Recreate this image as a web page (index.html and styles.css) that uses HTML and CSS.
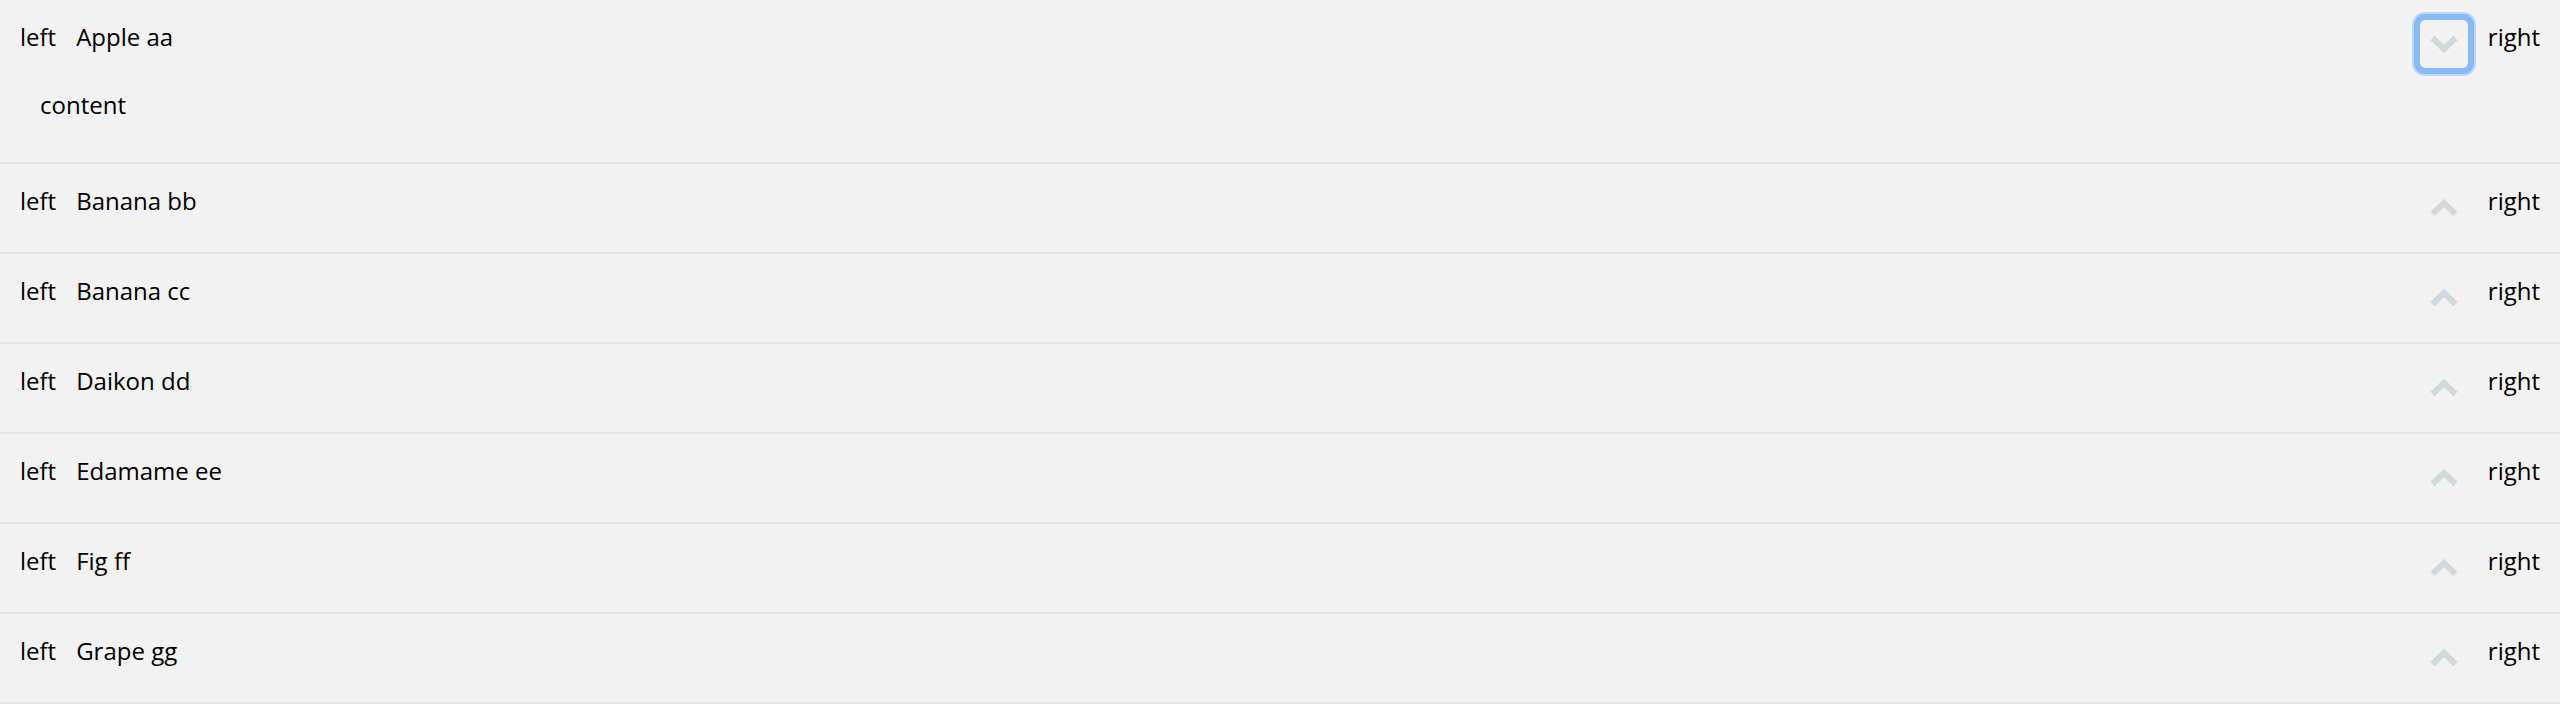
FILE: index.html
```html
<!DOCTYPE html>
<html lang="en">
<head>
<meta charset="utf-8">
<title>List</title>
<link rel="stylesheet" href="styles.css">
</head>
<body>
<ul class="list">
  <li class="item">
    <div class="header">
      <span class="left">left</span>
      <span class="title">Apple aa</span>
      <button class="toggle focused" type="button" aria-label="toggle">
        <svg class="chev" width="28" height="18" viewBox="0 0 28 18"><polyline points="2.5,3 14,14 25.5,3" /></svg>
      </button>
      <span class="right">right</span>
    </div>
    <div class="content">content</div>
  </li>
  <li class="item">
    <div class="header">
      <span class="left">left</span>
      <span class="title">Banana bb</span>
      <button class="toggle" type="button" aria-label="toggle">
        <svg class="chev up" width="28" height="18" viewBox="0 0 28 18"><polyline points="2.5,15 14,4 25.5,15" /></svg>
      </button>
      <span class="right">right</span>
    </div>
  </li>
  <li class="item">
    <div class="header">
      <span class="left">left</span>
      <span class="title">Banana cc</span>
      <button class="toggle" type="button" aria-label="toggle">
        <svg class="chev up" width="28" height="18" viewBox="0 0 28 18"><polyline points="2.5,15 14,4 25.5,15" /></svg>
      </button>
      <span class="right">right</span>
    </div>
  </li>
  <li class="item">
    <div class="header">
      <span class="left">left</span>
      <span class="title">Daikon dd</span>
      <button class="toggle" type="button" aria-label="toggle">
        <svg class="chev up" width="28" height="18" viewBox="0 0 28 18"><polyline points="2.5,15 14,4 25.5,15" /></svg>
      </button>
      <span class="right">right</span>
    </div>
  </li>
  <li class="item">
    <div class="header">
      <span class="left">left</span>
      <span class="title">Edamame ee</span>
      <button class="toggle" type="button" aria-label="toggle">
        <svg class="chev up" width="28" height="18" viewBox="0 0 28 18"><polyline points="2.5,15 14,4 25.5,15" /></svg>
      </button>
      <span class="right">right</span>
    </div>
  </li>
  <li class="item">
    <div class="header">
      <span class="left">left</span>
      <span class="title">Fig ff</span>
      <button class="toggle" type="button" aria-label="toggle">
        <svg class="chev up" width="28" height="18" viewBox="0 0 28 18"><polyline points="2.5,15 14,4 25.5,15" /></svg>
      </button>
      <span class="right">right</span>
    </div>
  </li>
  <li class="item">
    <div class="header">
      <span class="left">left</span>
      <span class="title">Grape gg</span>
      <button class="toggle" type="button" aria-label="toggle">
        <svg class="chev up" width="28" height="18" viewBox="0 0 28 18"><polyline points="2.5,15 14,4 25.5,15" /></svg>
      </button>
      <span class="right">right</span>
    </div>
  </li>
</ul>
</body>
</html>
```
FILE: styles.css
```css
html, body {
  margin: 0;
  padding: 0;
  background: #f2f2f2;
}
body {
  font-family: "Open Sans", "Noto Sans", sans-serif;
  font-size: 24px;
  color: #000;
}
.list {
  list-style: none;
  margin: 0;
  padding: 0;
}
.item {
  border-bottom: 2px solid #e2e8ec;
}
.header {
  display: flex;
  align-items: flex-start;
  padding: 20px;
  height: 48px;
}
.left {
  margin-right: 20px;
}
.title {
  flex: 1;
}
.toggle {
  width: 48px;
  height: 48px;
  padding: 0;
  margin: 0 20px 0 0;
  border: none;
  background: transparent;
  display: flex;
  align-items: center;
  justify-content: center;
  border-radius: 5px;
}
.toggle.focused {
  box-shadow: 0 0 0 6px #86bbf7, 0 0 0 8px rgba(134, 187, 247, 0.5);
}
.chev polyline {
  fill: none;
  stroke: #cfd9de;
  stroke-width: 6;
  stroke-linecap: butt;
  stroke-linejoin: miter;
}
.content {
  padding: 0 20px 41px 40px;
  line-height: 33px;
}
```
